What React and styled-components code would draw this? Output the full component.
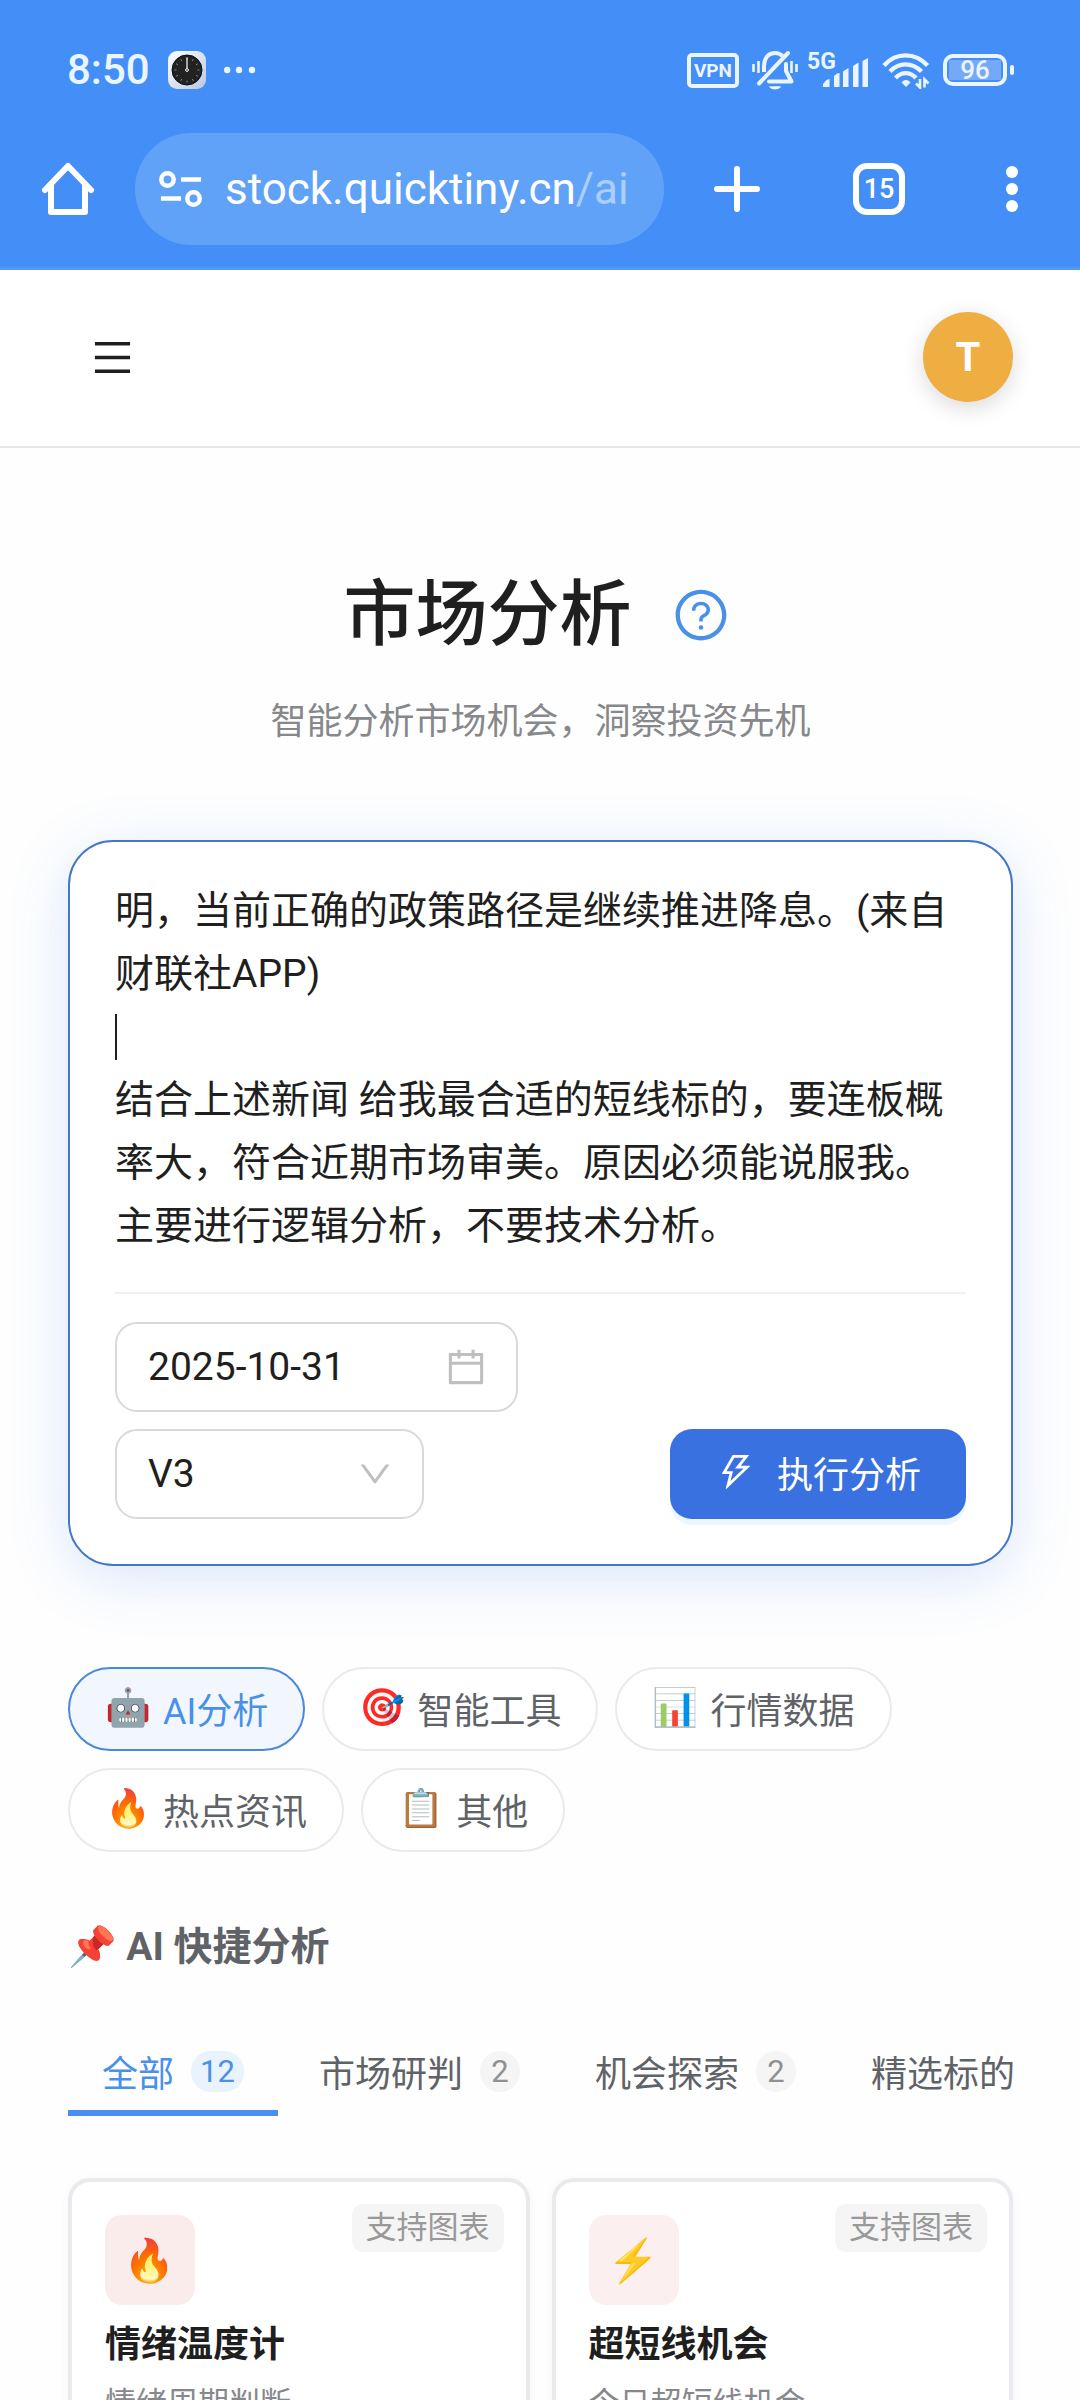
import React, { useState } from 'react';
import styled, { createGlobalStyle } from 'styled-components';
import {
  AiOutlineCalendar,
  AiOutlineDown,
  AiOutlineMenu,
  AiOutlineQuestionCircle,
  AiOutlineThunderbolt,
} from 'react-icons/ai';

const categories = [
  { icon: '🤖', label: 'AI分析' },
  { icon: '🎯', label: '智能工具' },
  { icon: '📊', label: '行情数据' },
  { icon: '🔥', label: '热点资讯' },
  { icon: '📋', label: '其他' },
];

const tabs = [
  { label: '全部', count: 12 },
  { label: '市场研判', count: 2 },
  { label: '机会探索', count: 2 },
  { label: '精选标的' },
];

const tools = [
  { icon: '🔥', tint: '#fbecec', title: '情绪温度计', text: '情绪周期判断' },
  { icon: '⚡', tint: '#fbf0ef', title: '超短线机会', text: '今日超短线机会' },
];

const defaultPrompt = `明，当前正确的政策路径是继续推进降息。(来自财联社APP)

结合上述新闻 给我最合适的短线标的，要连板概率大，符合近期市场审美。原因必须能说服我。主要进行逻辑分析，不要技术分析。`;

const StatusBar = () => (
  <Status>
    <Time>8:50</Time>
    <svg width='38' height='38' viewBox='0 0 38 38'>
      <defs>
        <linearGradient id='clock' x1='0' y1='0' x2='1' y2='1'>
          <stop offset='0' stopColor='#fff' />
          <stop offset='1' stopColor='#b9c8e6' />
        </linearGradient>
      </defs>
      <rect width='38' height='38' rx='9' fill='url(#clock)' />
      <circle cx='19' cy='19' r='15' fill='#222' stroke='#0c0c0c' />
      {[...Array(12)].map((_, i) => (
        <path
          key={i}
          d='M19 6.5v2'
          stroke='#999'
          strokeWidth='0.8'
          transform={`rotate(${i * 30} 19 19)`}
        />
      ))}
      <path d='M19 6.5v11' stroke='#fff' strokeWidth='1.2' />
      <circle cx='19' cy='19' r='1.4' fill='none' stroke='#fff' />
    </svg>
    <svg width='34' height='38' viewBox='0 0 34 38' fill='#eaf5ff'>
      <circle cx='3.200' cy='19' r='3.2' />
      <circle cx='15' cy='19' r='3.2' />
      <circle cx='28' cy='19' r='3.2' />
    </svg>
    <StatusIcons>
      <Vpn>VPN</Vpn>
      <svg width='46' height='40' viewBox='0 0 46 40' fill='none' stroke='#eaf5ff'>
        <path d='M12 22v-6C12 8 16.500 3 23 3c3 0 5.500 1 7.500 3' strokeWidth='4' />
        <path d='M34 14v7l5.500 10.500H17' strokeWidth='4' strokeLinejoin='round' strokeLinecap='round' />
        <path d='M7 33.500L36 3' strokeWidth='4' strokeLinecap='round' />
        <path d='M17 36.200h12c-1.500 4.400-10.500 4.400-12 0z' fill='#eaf5ff' stroke='none' />
        <path d='M1.500 14v8M6.500 11v12M39.500 11v12M44.500 14v8' strokeWidth='2.600' />
      </svg>
      <Signal>
        <span>5G</span>
        <svg width='46' height='30' viewBox='0 0 46 30' fill='#eaf5ff'>
          <path d='M0 29v-3l3.500-4 3-1v8zM11 29V18l3-2.500 2.500-.5v14zM20 29V13.500l5.500-3.500v19zM30 29V8l5.500-3.500V29zM39.500 29V3L45 0v29z' />
        </svg>
      </Signal>
      <svg width='48' height='38' viewBox='0 0 48 38' fill='none' stroke='#eaf5ff' strokeWidth='4.400'>
        <path d='M2 14.500C14 1 33 1 45.500 14.500' />
        <path d='M8 20.500c9-9.500 22-9.500 31.500 0' />
        <path d='M13.500 27c6-6.500 14.500-6.500 20.500 0' />
        <path d='M19.500 31.500c2-3.500 7-3.500 9 0L24 36z' fill='#eaf5ff' stroke='none' />
        <path d='M38 28v8.500l-4-4M42.500 36.500V28.500l4 4' strokeWidth='2.600' />
      </svg>
      <Battery>
        <span>96</span>
      </Battery>
    </StatusIcons>
  </Status>
);

const BrowserBar = () => (
  <Toolbar>
    <IconButton aria-label='主页'>
      <svg width='54' height='54' viewBox='0 0 54 54' fill='none' stroke='#fff' strokeWidth='6' strokeLinejoin='round' strokeLinecap='round'>
        <path d='M4 28L27 4l23 24' />
        <path d='M10 24v26h34V24' />
      </svg>
    </IconButton>
    <AddressBar aria-label='地址栏'>
      <svg width='44' height='38' viewBox='0 0 44 38' fill='none' stroke='#fff' strokeWidth='4.500'>
        <circle cx='8.500' cy='9.500' r='6.200' />
        <circle cx='34.500' cy='28.500' r='6.200' />
        <path d='M22 9.500h20M2 28.500h20' />
      </svg>
      <span>
        stock.quicktiny.cn<Path>/ai</Path>
      </span>
    </AddressBar>
    <Actions>
      <IconButton aria-label='新标签页'>
        <svg width='48' height='48' viewBox='0 0 48 48' stroke='#fff' strokeWidth='6' strokeLinecap='round'>
          <path d='M24 4v40M4 24h40' />
        </svg>
      </IconButton>
      <TabCount aria-label='标签页'>15</TabCount>
      <IconButton aria-label='更多'>
        <svg width='30' height='48' viewBox='0 0 30 48' fill='#fff'>
          <circle cx='15' cy='7' r='6' />
          <circle cx='15' cy='24' r='6' />
          <circle cx='15' cy='41' r='6' />
        </svg>
      </IconButton>
    </Actions>
  </Toolbar>
);

const Composer = () => {
  const [prompt, setPrompt] = useState(defaultPrompt);
  const [date, setDate] = useState('2025-10-31');

  return (
    <ComposerCard>
      <PromptWrap>
        <Prompt
          aria-label='分析内容'
          rows={6}
          spellCheck={false}
          value={prompt}
          onChange={(e) => setPrompt(e.target.value)}
        />
        <Caret />
      </PromptWrap>
      <Controls>
        <DateField>
          <input
            aria-label='日期'
            value={date}
            onChange={(e) => setDate(e.target.value)}
          />
          <AiOutlineCalendar size={44} />
        </DateField>
        <ControlRow>
          <SelectField>
            <select aria-label='模型' defaultValue='V3'>
              <option>V3</option>
              <option>R1</option>
            </select>
            <AiOutlineDown size={38} />
          </SelectField>
          <RunButton>
            <AiOutlineThunderbolt size={42} />
            执行分析
          </RunButton>
        </ControlRow>
      </Controls>
    </ComposerCard>
  );
};

const App = () => {
  const [category, setCategory] = useState(0);
  const [tab, setTab] = useState(0);

  return (
    <Page>
      <GlobalStyle />
      <Chrome>
        <StatusBar />
        <BrowserBar />
      </Chrome>
      <SiteHeader>
        <MenuButton aria-label='菜单'>
          <AiOutlineMenu size={45} />
        </MenuButton>
        <Avatar>T</Avatar>
      </SiteHeader>
      <Main>
        <TitleRow>
          <h1>市场分析</h1>
          <HelpButton aria-label='帮助'>
            <AiOutlineQuestionCircle size={58} />
          </HelpButton>
        </TitleRow>
        <Subtitle>智能分析市场机会，洞察投资先机</Subtitle>
        <Composer />
        <Categories>
          {categories.map((item, index) => (
            <Category
              key={item.label}
              $active={index === category}
              onClick={() => setCategory(index)}
            >
              <span>{item.icon}</span>
              {item.label}
            </Category>
          ))}
        </Categories>
        <SectionTitle>📌 AI 快捷分析</SectionTitle>
        <Tabs role='tablist'>
          {tabs.map((item, index) => (
            <Tab
              key={item.label}
              role='tab'
              aria-selected={index === tab}
              $active={index === tab}
              onClick={() => setTab(index)}
            >
              {item.label}
              {item.count && <Count $active={index === tab}>{item.count}</Count>}
            </Tab>
          ))}
        </Tabs>
        <Cards>
          {tools.map((tool) => (
            <Card key={tool.title}>
              <Tag>支持图表</Tag>
              <CardIcon $tint={tool.tint}>{tool.icon}</CardIcon>
              <h3>{tool.title}</h3>
              <p>{tool.text}</p>
            </Card>
          ))}
        </Cards>
      </Main>
    </Page>
  );
};

export default App;

const GlobalStyle = createGlobalStyle`
  * {
    box-sizing: border-box;
  }
  body {
    margin: 0;
    background: #fefefe;
    color: #1f1f1f;
  }
  body, button, input, select, textarea {
    font-family: Roboto, 'Noto Sans CJK SC', 'Noto Color Emoji', sans-serif;
  }
  button {
    padding: 0;
    border: 0;
    background: none;
    color: inherit;
    cursor: pointer;
  }
  h1, h3, p {
    margin: 0;
  }
  svg {
    display: block;
    flex-shrink: 0;
  }
`;

const Page = styled.div`
  height: 100vh;
  overflow: hidden;
`;

const Chrome = styled.header`
  background: #448ef7;
  border-bottom: 3px solid #5599f6;
  color: #fff;
  padding: 50px 0 22px;
`;

const Status = styled.div`
  display: flex;
  align-items: center;
  gap: 18px;
  height: 40px;
  padding: 0 67px;
  color: #eaf5ff;
`;

const Time = styled.span`
  font-size: 42px;
  font-weight: 500;
  line-height: 40px;
`;

const StatusIcons = styled.div`
  display: flex;
  align-items: center;
  gap: 13px;
  margin-left: auto;
`;

const Vpn = styled.span`
  height: 35px;
  padding: 0 3px;
  border: 4px solid #eaf5ff;
  border-radius: 5px;
  font-size: 19px;
  font-weight: 700;
  line-height: 27px;
`;

const Signal = styled.div`
  display: flex;
  align-items: flex-end;
  position: relative;
  height: 36px;
  padding-left: 12px;

  span {
    position: absolute;
    top: 0;
    left: -4px;
    font-size: 23px;
    font-weight: 700;
    line-height: 20px;
  }
`;

const Battery = styled.div`
  position: relative;
  width: 64px;
  height: 32px;
  margin-right: 6px;
  padding: 2px;
  border: 4px solid #eaf5ff;
  border-radius: 10px;

  span {
    display: block;
    background: #74a9f8;
    font-size: 26px;
    font-weight: 500;
    line-height: 20px;
    text-align: center;
  }

  &::after {
    content: '';
    position: absolute;
    top: 7px;
    right: -11px;
    width: 4px;
    height: 10px;
    border-radius: 2px;
    background: #eaf5ff;
  }
`;

const Toolbar = styled.div`
  display: flex;
  align-items: center;
  margin-top: 43px;
  padding: 0 53px 0 41px;
`;

const IconButton = styled.button`
  display: flex;
`;

const AddressBar = styled.button`
  display: flex;
  align-items: center;
  gap: 22px;
  flex: 1;
  min-width: 0;
  height: 112px;
  margin: 0 49px 0 40px;
  padding: 0 24px;
  border-radius: 56px;
  background: #60a2f7;
  color: #fff;
  font-size: 44px;
  white-space: nowrap;
`;

const Path = styled.span`
  color: #a9d0fc;
`;

const Actions = styled.div`
  display: flex;
  align-items: center;
  justify-content: space-between;
  width: 314px;
`;

const TabCount = styled.button`
  width: 52px;
  height: 52px;
  border: 6px solid #fff;
  border-radius: 14px;
  font-size: 27px;
  font-weight: 500;
  line-height: 40px;
`;

const SiteHeader = styled.div`
  display: flex;
  align-items: center;
  justify-content: space-between;
  height: 178px;
  padding: 0 67px 2px 90px;
  border-bottom: 2px solid #e5e6ea;
  background: #fff;
`;

const MenuButton = styled.button`
  display: flex;
`;

const Avatar = styled.button`
  width: 90px;
  height: 90px;
  border-radius: 50%;
  background: #eeae42;
  box-shadow: 0 6px 22px rgba(0, 0, 0, 0.15);
  color: #fff;
  font-size: 40px;
  font-weight: 700;
`;

const Main = styled.main`
  padding: 115px 67px 0 68px;
`;

const TitleRow = styled.div`
  display: flex;
  align-items: center;
  justify-content: center;
  gap: 32px;

  h1 {
    font-size: 72px;
    font-weight: 500;
    line-height: 104px;
  }
`;

const HelpButton = styled.button`
  display: flex;
  padding: 0 8px;
  color: #4a90e8;
`;

const Subtitle = styled.p`
  margin-top: 25px;
  color: #86888c;
  font-size: 36px;
  line-height: 60px;
  text-align: center;
`;

const ComposerCard = styled.section`
  margin-top: 88px;
  padding: 38px 45px 45px;
  border: 2px solid #4577c8;
  border-radius: 45px;
  background: #fff;
  box-shadow: 0 12px 60px rgba(69, 133, 240, 0.2);
`;

const PromptWrap = styled.div`
  position: relative;
`;

const Prompt = styled.textarea`
  display: block;
  width: 100%;
  padding: 0;
  border: 0;
  outline: 0;
  resize: none;
  overflow: hidden;
  background: none;
  color: #1f1f1f;
  font-size: 39px;
  line-height: 63px;
`;

const Caret = styled.span`
  position: absolute;
  top: 134px;
  left: 0;
  width: 2px;
  height: 46px;
  background: #1f1f1f;
`;

const Controls = styled.div`
  display: flex;
  flex-direction: column;
  align-items: flex-start;
  gap: 17px;
  margin-top: 34px;
  padding-top: 28px;
  border-top: 2px solid #f0f0f0;
`;

const Field = styled.label`
  display: flex;
  align-items: center;
  height: 90px;
  padding: 0 28px 0 31px;
  border: 2px solid #d9d9d9;
  border-radius: 22px;
  background: #fff;
  color: #bfbfbf;

  input,
  select {
    flex: 1;
    min-width: 0;
    height: 100%;
    padding: 0;
    border: 0;
    outline: 0;
    background: none;
    appearance: none;
    color: #1f1f1f;
    font-size: 39px;
  }
`;

const DateField = styled(Field)`
  width: 403px;
`;

const ControlRow = styled.div`
  display: flex;
  align-items: center;
  justify-content: space-between;
  width: 100%;
`;

const SelectField = styled(Field)`
  width: 309px;
`;

const RunButton = styled.button`
  display: flex;
  align-items: center;
  gap: 20px;
  height: 90px;
  padding: 0 45px 4px;
  border-radius: 22px;
  background: #3971e1;
  box-shadow: 0 6px 0 rgba(5, 145, 255, 0.08);
  color: #fff;
  font-size: 36px;
`;

const Categories = styled.div`
  display: flex;
  flex-wrap: wrap;
  gap: 17px;
  margin-top: 101px;
`;

const Category = styled.button`
  display: flex;
  align-items: center;
  gap: 12px;
  height: 84px;
  padding: 0 35px 3px;
  border: 2px solid ${({ $active }) => ($active ? '#4a88dc' : '#e8eaed')};
  border-radius: 42px;
  background: ${({ $active }) => ($active ? '#f2f7ff' : '#fff')};
  color: ${({ $active }) => ($active ? '#4a90e8' : '#5f6368')};
  font-size: 36px;

  span {
    font-size: 37px;
  }
`;

const SectionTitle = styled.h3`
  margin-top: 64px;
  color: #5f6368;
  font-size: 39px;
  font-weight: 700;
  line-height: 62px;
`;

const Tabs = styled.div`
  display: flex;
  gap: 7px;
  margin-top: 54px;
  overflow: hidden;
`;

const Tab = styled.button`
  display: flex;
  flex-shrink: 0;
  align-items: center;
  gap: 17px;
  height: 84px;
  padding: 0 34px;
  border-bottom: 6px solid ${({ $active }) => ($active ? '#4a8ff0' : 'transparent')};
  color: ${({ $active }) => ($active ? '#4a90e8' : '#5f6368')};
  font-size: 36px;
`;

const Count = styled.span`
  min-width: 40px;
  padding: 0 9px;
  border-radius: 20px;
  background: ${({ $active }) => ($active ? '#e8f3fe' : '#f5f5f5')};
  color: ${({ $active }) => ($active ? '#4a90e8' : '#909090')};
  font-size: 31px;
  line-height: 41px;
`;

const Cards = styled.div`
  display: grid;
  grid-template-columns: 1fr 1fr;
  gap: 22px;
  margin-top: 62px;
`;

const Card = styled.article`
  position: relative;
  padding: 33px;
  border: 4px solid #e8eaed;
  border-radius: 22px;
  background: #fff;
  box-shadow: 0 3px 12px rgba(0, 0, 0, 0.04);

  h3 {
    margin-top: 12px;
    font-size: 36px;
    font-weight: 700;
    line-height: 56px;
  }

  p {
    margin-top: 6px;
    color: #86888c;
    font-size: 31px;
    line-height: 50px;
  }
`;

const Tag = styled.span`
  position: absolute;
  top: 22px;
  right: 22px;
  padding: 0 14px;
  border-radius: 11px;
  background: #f5f5f5;
  color: #999;
  font-size: 31px;
  line-height: 48px;
`;

const CardIcon = styled.div`
  display: flex;
  align-items: center;
  justify-content: center;
  width: 90px;
  height: 90px;
  border-radius: 17px;
  background: ${({ $tint }) => $tint};
  font-size: 42px;
`;
